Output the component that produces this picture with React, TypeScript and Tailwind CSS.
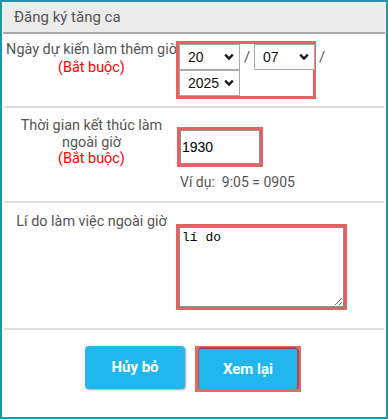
import React from 'react';

const RED_RING = 'shadow-[0_0_0_3px_#e66262]';

function Chevron() {
  return (
    <svg width="10" height="7" viewBox="0 0 10 7" className="pointer-events-none absolute right-[6px] top-1/2 -translate-y-1/2">
      <polyline points="1.2,1.2 5,5 8.8,1.2" fill="none" stroke="#1a1a1a" strokeWidth="2.4" />
    </svg>
  );
}

function DateSelect({ value }: { value: string }) {
  return (
    <div className="relative h-[26px] w-[61px] shrink-0">
      <select
        defaultValue={value}
        className="h-full w-full appearance-none border border-[#a9a9a9] bg-white pl-[8px] text-[14px] text-[#111] outline-none"
        style={{ fontFamily: 'Arial, "Liberation Sans", sans-serif' }}
      >
        <option value={value}>{value}</option>
      </select>
      <Chevron />
    </div>
  );
}

export default function App() {
  return (
    <div
      className="h-[419px] w-[388px] border-2 border-[#1a97a8] bg-white px-[2px] text-[#555]"
      style={{ fontFamily: 'Roboto, "Liberation Sans", sans-serif' }}
    >
      {/* Header */}
      <div className="-mx-px flex h-[32px] items-center border-b-2 border-[#a8a8a8] bg-[#ebebeb] pl-[11px] text-[15px]">
        Đăng ký tăng ca
      </div>

      {/* Ngày dự kiến */}
      <div className="flex h-[74px] border-b-2 border-[#dedede]">
        <div className="w-[175px] shrink-0 pt-[7px] text-center text-[14.4px] leading-[18px] whitespace-nowrap">
          <div>Ngày dự kiến làm thêm giờ</div>
          <div className="text-[#ff0000]">(Bắt buộc)</div>
        </div>
        <div className="pt-[10px]">
          <div className={`h-[52px] w-[134px] bg-white ${RED_RING}`}>
            <div className="flex w-[150px] items-center">
              <DateSelect value="20" />
              <span className="w-[14px] text-center text-[15px]">/</span>
              <DateSelect value="07" />
              <span className="w-[14px] text-center text-[15px]">/</span>
            </div>
            <DateSelect value="2025" />
          </div>
        </div>
      </div>

      {/* Thời gian kết thúc */}
      <div className="flex h-[95px] border-b-2 border-[#dedede]">
        <div className="w-[175px] shrink-0 pt-[10px] text-center text-[14.4px] leading-[16.5px]">
          <div>Thời gian kết thúc làm</div>
          <div>ngoài giờ</div>
          <div className="text-[#ff0000]">(Bắt buộc)</div>
        </div>
        <div className="pt-[22px] pl-px">
          <input
            defaultValue="1930"
            className={`h-[34px] w-[80px] border border-[#8f8f8f] bg-white pl-px text-[14px] text-black outline-none ${RED_RING}`}
            style={{ fontFamily: 'Arial, "Liberation Sans", sans-serif' }}
          />
          <div className="mt-[10px] text-[14px] leading-[16px] whitespace-pre">Ví dụ:  9:05 = 0905</div>
        </div>
      </div>

      {/* Lí do */}
      <div className="flex h-[127px] border-b-2 border-[#dedede]">
        <div className="w-[175px] shrink-0 pt-[10px] text-center text-[14.4px] leading-[17px]">
          Lí do làm việc ngoài giờ
        </div>
        <div className="pt-[24px]">
          <textarea
            defaultValue="lí do"
            className={`block h-[80px] w-[165px] border border-[#8f8f8f] bg-white p-[2px] text-[13px] leading-[15px] text-black outline-none ${RED_RING}`}
            style={{ fontFamily: '"Liberation Mono", "DejaVu Sans Mono", monospace' }}
          />
        </div>
      </div>

      {/* Buttons */}
      <div className="flex justify-center gap-[10px] pt-[16px] pr-[2px]">
        <button className="h-[43px] w-[100px] rounded-[4px] bg-[#22b7ec] text-[15px] font-bold text-white shadow-[1px_1px_2px_rgba(0,0,0,0.35)]">
          Hủy bỏ
        </button>
        <div className="h-[46px] w-[106px] bg-[#e66868] px-[4px] pt-[3px]">
          <button className="h-[40px] w-[98px] rounded-[2px] bg-[#22b7ec] text-[15px] font-bold text-white shadow-[0_-2px_0_#a3495a,2px_0_0_#a3495a,-1px_0_0_#b4505e]">
            Xem lại
          </button>
        </div>
      </div>
    </div>
  );
}
